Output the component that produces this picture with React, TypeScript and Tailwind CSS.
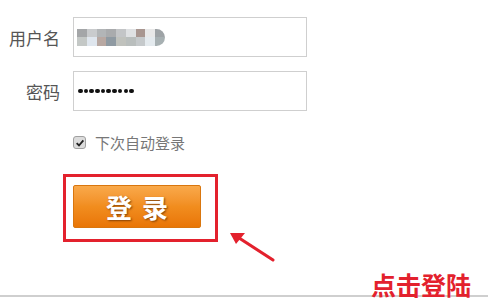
import React from 'react'

const BLUR_TOP = ['#a4a6a8', '#c9cbcd', '#b2b5b7', '#a9abad', '#c3c5c7', '#dfe1e3', '#a89690', '#e8e8e8', '#9ea3a6']
const BLUR_BOTTOM = ['#c4c8c6', '#dfe6ee', '#b8a8a2', '#8f9aa2', '#c0c2bd', '#b9bebd', '#c5c9cb', '#e4eaee', '#a7b0b2']

function BlurredName() {
  return (
    <div className="ml-[2px] h-[17px] w-[88px] overflow-hidden rounded-r-full">
      <div className="flex h-[8px]">
        {BLUR_TOP.map((c, i) => (
          <div key={i} className="h-full w-[10px]" style={{ background: c }} />
        ))}
      </div>
      <div className="flex h-[9px]">
        {BLUR_BOTTOM.map((c, i) => (
          <div key={i} className="h-full w-[10px]" style={{ background: c }} />
        ))}
      </div>
    </div>
  )
}

export default function App() {
  return (
    <div className="relative h-[307px] w-[488px] overflow-hidden bg-white pt-[17px] font-['Noto_Sans_CJK_SC',sans-serif]">
      {/* username */}
      <div className="flex items-center">
        <label className="w-[60px] text-right text-[17px] leading-none text-[#555]">用户名</label>
        <div className="ml-[13px] flex h-[40px] w-[234px] items-center border border-[#cfcfcf] px-[1px]">
          <BlurredName />
        </div>
      </div>

      {/* password */}
      <div className="mt-[14px] flex items-center">
        <label className="w-[60px] text-right text-[17px] leading-none text-[#555]">密码</label>
        <div className="ml-[13px] flex h-[40px] w-[234px] items-center border border-[#cfcfcf] pl-[4px]">
          <div className="flex gap-[1.2px]">
            {Array.from({ length: 10 }).map((_, i) => (
              <span key={i} className="h-[4.5px] w-[4.5px] rounded-full bg-[#111]" />
            ))}
          </div>
        </div>
      </div>

      {/* remember me */}
      <div className="ml-[73px] mt-[24px] flex items-center gap-[9px]">
        <span className="flex h-[13px] w-[13px] items-center justify-center rounded-[3px] border border-[#a0a0a0] bg-[#dcdcdc]">
          <svg viewBox="0 0 12 12" className="h-[10px] w-[10px]">
            <path d="M2 6.2 L4.8 9 L10 2.8" fill="none" stroke="#222" strokeWidth="2.2" />
          </svg>
        </span>
        <span className="text-[15px] leading-none text-[#777]">下次自动登录</span>
      </div>

      {/* login button with highlight */}
      <div className="ml-[63px] mt-[24px] h-[68px] w-[155px] border-[3px] border-[#e3212d] pl-[7px] pt-[8px]">
        <button className="flex h-[43px] w-[128px] items-center justify-center gap-[10px] rounded-[2px] border border-[#d9760e] bg-gradient-to-b from-[#f9a94a] via-[#f18d1e] to-[#e97505] text-[26px] font-bold leading-none text-white [text-shadow:1px_1px_2px_rgba(90,40,0,0.7)]">
          <span>登</span>
          <span>录</span>
        </button>
      </div>

      {/* arrow annotation */}
      <svg className="absolute left-[226px] top-[228px] h-[36px] w-[52px]" viewBox="0 0 52 36">
        <line x1="47" y1="32" x2="10" y2="8" stroke="#e3212d" strokeWidth="3.2" strokeLinecap="round" />
        <polygon points="4,5 19,5 10,16" fill="#e3212d" />
      </svg>

      {/* divider */}
      <div className="mt-[53px] h-[1.5px] w-full bg-[#cfcfcf]" />

      <span className="absolute left-[371px] top-[272px] text-[25px] font-bold leading-none text-[#e3212d]">
        点击登陆
      </span>
    </div>
  )
}
